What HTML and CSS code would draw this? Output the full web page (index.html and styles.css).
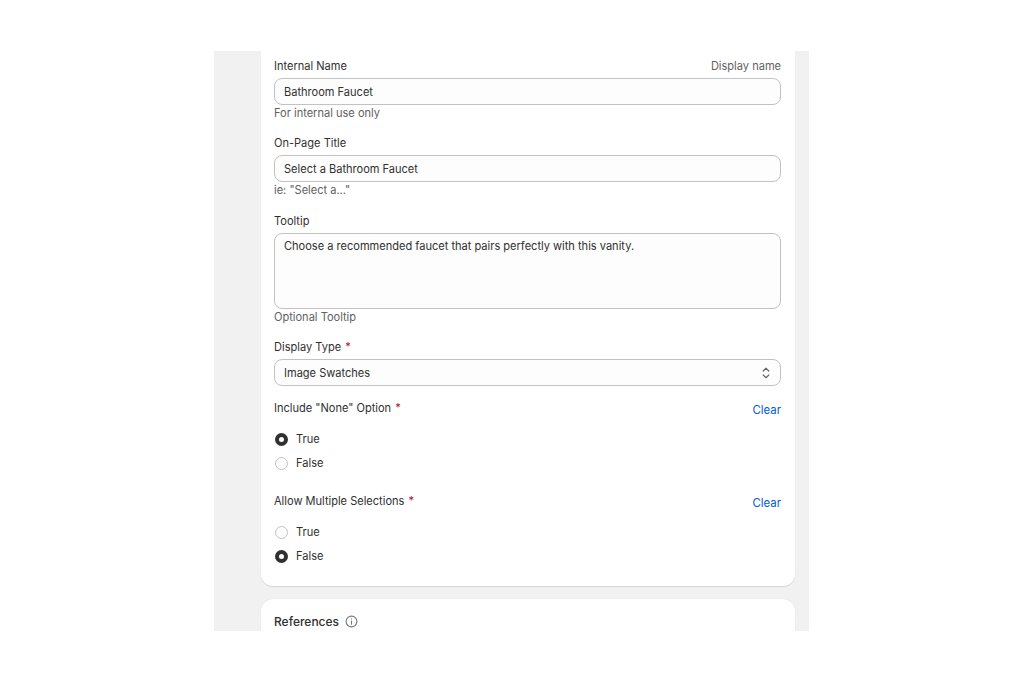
FILE: index.html
```html
<!DOCTYPE html>
<html lang="en">
<head>
    <meta charset="UTF-8">
    <title>Option settings</title>
    <link rel="stylesheet" href="styles.css">
</head>
<body>
    <div class="page">
        <div class="card main-card">
            <div class="field">
                <div class="label-row">
                    <span class="label">Internal Name</span>
                    <span class="muted">Display name</span>
                </div>
                <div class="input">Bathroom Faucet</div>
                <div class="muted help">For internal use only</div>
            </div>
            <div class="field">
                <div class="label-row">
                    <span class="label">On-Page Title</span>
                </div>
                <div class="input">Select a Bathroom Faucet</div>
                <div class="muted help">ie: "Select a..."</div>
            </div>
            <div class="field">
                <div class="label-row">
                    <span class="label">Tooltip</span>
                </div>
                <div class="input textarea">Choose a recommended faucet that pairs perfectly with this vanity.</div>
                <div class="muted help">Optional Tooltip</div>
            </div>
            <div class="field">
                <div class="label-row">
                    <span class="label">Display Type <span class="req">*</span></span>
                </div>
                <div class="input select">
                    <span>Image Swatches</span>
                    <svg class="chevrons" width="10" height="14" viewBox="0 0 10 14" fill="none" stroke="#666" stroke-width="1.2" stroke-linecap="round" stroke-linejoin="round">
                        <path d="M2.2 5 L5 2.3 L7.8 5"/>
                        <path d="M2.2 9 L5 11.7 L7.8 9"/>
                    </svg>
                </div>
            </div>
            <div class="group group-none">
                <div class="label-row group-head">
                    <span class="label">Include "None" Option <span class="req">*</span></span>
                    <a class="clear">Clear</a>
                </div>
                <div class="radio-row"><span class="radio on"></span>True</div>
                <div class="radio-row"><span class="radio"></span>False</div>
            </div>
            <div class="group">
                <div class="label-row group-head">
                    <span class="label">Allow Multiple Selections <span class="req">*</span></span>
                    <a class="clear">Clear</a>
                </div>
                <div class="radio-row"><span class="radio"></span>True</div>
                <div class="radio-row"><span class="radio on"></span>False</div>
            </div>
        </div>
        <div class="card refs-card">
            <h2>References</h2>
            <svg width="13" height="13" viewBox="0 0 13 13" fill="none" stroke="#777" stroke-width="1.1" stroke-linecap="round">
                <circle cx="6.5" cy="6.5" r="5.4"/>
                <path d="M6.5 6 V9.3"/>
                <path d="M6.5 3.8 V3.9"/>
            </svg>
        </div>
    </div>
</body>
</html>
```

FILE: styles.css
```css
* {
    box-sizing: border-box;
    margin: 0;
    padding: 0;
}
body {
    background-color: white;
    font-family: Inter, "Liberation Sans", sans-serif;
    font-size: 11.05px;
    color: #303030;
}
.page {
    width: 595px;
    height: 580px;
    margin: 51px 0 0 214px;
    padding: 0 14px 0 47px;
    background-color: #f1f1f1;
    overflow: hidden;
}
.card {
    background-color: white;
    box-shadow: 0 1px 1px #d4d4d4;
}
.main-card {
    height: 535px;
    padding: 0 14px 0 13px;
    border-radius: 0 0 12px 12px;
}
.refs-card {
    display: flex;
    align-items: center;
    gap: 6px;
    height: 60px;
    margin-top: 13px;
    padding: 0 13px 16px;
    border-radius: 12px 12px 0 0;
    box-shadow: 0 0 1px #d4d4d4;
}
.refs-card h2 {
    font-size: 12px;
    font-weight: 500;
    color: #303030;
}
.field {
    padding-top: 8px;
    margin-bottom: 8.4px;
}
.label-row {
    display: flex;
    justify-content: space-between;
    align-items: center;
    height: 14px;
    margin-bottom: 5px;
}
.muted {
    color: #616161;
}
.help {
    height: 14px;
    margin-top: 1px;
    line-height: 14px;
}
.input {
    display: flex;
    align-items: center;
    height: 27px;
    padding: 0 9px;
    background-color: #fdfdfd;
    border: 1px solid #c2c2c2;
    border-radius: 8px;
}
.textarea {
    align-items: flex-start;
    height: 76px;
    padding-top: 5px;
}
.select {
    justify-content: space-between;
    padding-right: 9px;
}
.req {
    margin-left: 1px;
    color: #a8112c;
}
.group {
    height: 93px;
}
.group-none {
    margin-top: 15px;
}
.group-head {
    height: 20px;
    margin-bottom: 6px;
    align-items: flex-start;
}
.clear {
    margin-top: 2px;
    font-size: 11.4px;
    color: #005bd3;
}
.radio-row {
    display: flex;
    align-items: center;
    gap: 8px;
    height: 24px;
}
.radio {
    width: 13px;
    height: 13px;
    margin-left: 1px;
    background-color: #fdfdfd;
    border: 1px solid #c2c2c2;
    border-radius: 50%;
}
.radio.on {
    background-color: white;
    border: 4px solid #303030;
}
```
